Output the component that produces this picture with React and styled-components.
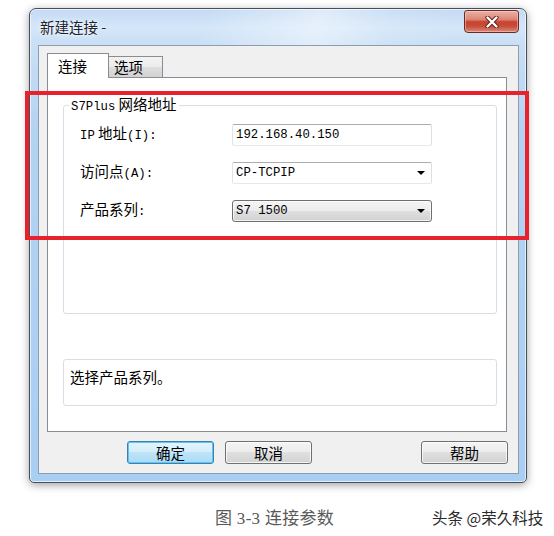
import React from 'react';
import styled, { createGlobalStyle } from 'styled-components';

const Global = createGlobalStyle`
  html, body { margin: 0; padding: 0; background: #fff; }
  body { font-family: "Noto Sans CJK SC", sans-serif; color: #000; }
  #root { width: 554px; height: 536px; }
`;

const Page = styled.div`
  position: relative;
  width: 554px;
  height: 536px;
  box-sizing: border-box;
  padding: 8px 0 0 29px;
  display: flex;
  flex-direction: column;
  overflow: hidden;
`;

const Window = styled.div`
  width: 498px;
  height: 475px;
  box-sizing: border-box;
  border: 1px solid #46505c;
  border-radius: 7px 7px 5px 5px;
  background: linear-gradient(180deg, #c3daf3 0px, #d4e6f9 18px, #c9dff5 36px, #b3d3f2 120px, #a9cef3 100%);
  box-shadow: 0 2px 9px rgba(0, 0, 0, 0.38), inset 0 0 0 1px rgba(255, 255, 255, 0.65);
  display: flex;
  flex-direction: column;
`;

const TitleBar = styled.div`
  height: 36px;
  flex: none;
  display: flex;
  align-items: center;
  padding-left: 10px;
  border-radius: 6px 6px 0 0;
  background: linear-gradient(105deg, rgba(255,255,255,0) 35%, rgba(255,255,255,0.45) 58%, rgba(255,255,255,0.1) 72%, rgba(255,255,255,0) 85%);
`;

const Title = styled.span`
  font-size: 14.5px;
  line-height: 20px;
  color: #1b2330;
  text-shadow: 0 0 5px rgba(255, 255, 255, 0.95), 0 0 2px rgba(255, 255, 255, 0.9);
  margin-top: -1px;
`;

const CloseButton = styled.div`
  margin-left: auto;
  margin-right: 7px;
  align-self: flex-start;
  margin-top: 1px;
  width: 55px;
  height: 23px;
  box-sizing: border-box;
  border: 1px solid #6a2b22;
  border-radius: 3px 3px 4px 4px;
  background: linear-gradient(180deg, #eab1a5 0%, #dd8676 40%, #c6432f 52%, #c84c38 72%, #da8a7b 100%);
  box-shadow: inset 0 0 0 1px rgba(255, 220, 210, 0.45);
  display: flex;
  align-items: center;
  justify-content: center;
`;

const Client = styled.div`
  flex: 1;
  margin: 0 7px 8px 8px;
  background: #f0f0f0;
  border: 1px solid #8f9cab;
  display: flex;
  flex-direction: column;
  padding: 7px 11px 9px 8px;
  min-height: 0;
`;

const TabStrip = styled.div`
  height: 24px;
  flex: none;
  display: flex;
  align-items: flex-end;
  position: relative;
  z-index: 1;
`;

const Tab = styled.div`
  box-sizing: border-box;
  border: 1px solid #898c95;
  border-bottom: none;
  display: flex;
  align-items: center;
  font-size: 14.5px;
  line-height: 18px;
  width: ${p => (p.$active ? '62px' : '54px')};
  height: ${p => (p.$active ? '25px' : '21px')};
  margin-bottom: ${p => (p.$active ? '-1px' : '0')};
  padding-left: ${p => (p.$active ? '10px' : '5px')};
  padding-bottom: ${p => (p.$active ? '1px' : '0')};
  border-left: ${p => (p.$active ? '1px solid #898c95' : 'none')};
  background: ${p => (p.$active ? '#fff' : 'linear-gradient(180deg, #f3f3f3 0%, #ebebeb 50%, #dedede 51%, #d2d2d2 100%)')};
`;

const Panel = styled.div`
  flex: 1;
  background: #fff;
  border: 1px solid #898c95;
  display: flex;
  flex-direction: column;
  padding: 0 9px 0 15px;
  min-height: 0;
`;

const GroupBox = styled.fieldset`
  margin: 18px 0 0;
  padding: 0;
  min-width: 0;
  border: 1px solid #d5dfe5;
  border-radius: 3px;
`;

const Legend = styled.legend`
  margin-left: 5px;
  padding: 0 2px;
  font-size: 14.5px;
  line-height: 16px;
`;

const FormGrid = styled.div`
  display: grid;
  grid-template-columns: 152px 200px;
  row-gap: 15px;
  align-items: center;
  padding: 8px 0 91px 16px;
`;

const Label = styled.span`
  font-size: 14.5px;
  line-height: 20px;
  white-space: nowrap;
`;

const Mono = styled.span`
  font-family: "Liberation Mono", monospace;
  font-size: 12.3px;
`;

const Field = styled.div`
  height: 22px;
  box-sizing: border-box;
  display: flex;
  align-items: center;
  padding-left: 3px;
  font-family: "Liberation Mono", monospace;
  font-size: 12.3px;
  border: 1px solid;
  border-radius: ${p => (p.$button ? '3px' : '2px')};
  border-color: ${p => (p.$button ? '#707070' : '#abadb3 #dbdfe6 #e3e9ef #e2e3ea')};
  background: ${p => (p.$button ? 'linear-gradient(180deg, #f4f4f4 0%, #ececec 49%, #dfdfdf 50%, #d2d2d2 100%)' : '#fff')};
  box-shadow: ${p => (p.$button ? 'inset 0 0 0 1px rgba(255,255,255,0.7)' : 'none')};
`;

const Arrow = styled.span`
  margin-left: auto;
  margin-right: 6px;
  width: 0;
  height: 0;
  border-left: 4px solid transparent;
  border-right: 4px solid transparent;
  border-top: 4px solid #000;
`;

const InfoBox = styled.div`
  margin-top: 45px;
  height: 47px;
  box-sizing: border-box;
  border: 1px solid #d5dfe5;
  border-radius: 3px;
  padding: 7px 6px 0;
  font-size: 14.5px;
  line-height: 20px;
`;

const ButtonRow = styled.div`
  flex: none;
  margin-top: 9px;
  display: flex;
  gap: 11px;
  padding-left: 80px;
  margin-right: -1px;
`;

const Button = styled.div`
  width: 87px;
  height: 23px;
  box-sizing: border-box;
  border: 1px solid ${p => (p.$default ? '#3c7fb1' : '#707070')};
  border-radius: 3px;
  display: flex;
  align-items: center;
  justify-content: center;
  font-size: 14.5px;
  margin-left: ${p => (p.$push ? 'auto' : '0')};
  background: ${p => (p.$default
    ? 'linear-gradient(180deg, #e5f4fc 0%, #d4edfb 49%, #bde4f9 50%, #abdaf5 100%)'
    : 'linear-gradient(180deg, #f4f4f4 0%, #ececec 49%, #dfdfdf 50%, #d2d2d2 100%)')};
  box-shadow: ${p => (p.$default ? 'inset 0 0 0 1px #62c5f1' : 'inset 0 0 0 1px rgba(255,255,255,0.75)')};
`;

const CaptionRow = styled.div`
  margin-top: 21px;
  height: 24px;
  display: grid;
  grid-template-columns: 186px 217px auto;
  align-items: center;
`;

const Caption = styled.span`
  grid-column: 2;
  font-family: "Liberation Serif", "Noto Sans CJK SC", serif;
  font-size: 17px;
  letter-spacing: 0.3px;
  color: #595959;
  white-space: nowrap;
`;

const Watermark = styled.span`
  grid-column: 3;
  font-size: 15.5px;
  color: #2b2b2b;
  white-space: nowrap;
`;

const Highlight = styled.div`
  position: absolute;
  left: 25px;
  top: 91px;
  width: 504px;
  height: 149px;
  box-sizing: border-box;
  border: 4px solid #e8222c;
  pointer-events: none;
`;

const CloseIcon = () => (
  <svg width="14" height="12" viewBox="0 0 14 12">
    <path d="M2.5 1.5 L11.5 10.5 M11.5 1.5 L2.5 10.5" stroke="#5b2019" strokeWidth="4.2" strokeLinecap="round" fill="none" />
    <path d="M2.5 1.5 L11.5 10.5 M11.5 1.5 L2.5 10.5" stroke="#ffffff" strokeWidth="2.4" strokeLinecap="round" fill="none" />
  </svg>
);

export default function App() {
  return (
    <>
      <Global />
      <Page>
        <Window>
          <TitleBar>
            <Title>新建连接 -</Title>
            <CloseButton><CloseIcon /></CloseButton>
          </TitleBar>
          <Client>
            <TabStrip>
              <Tab $active>连接</Tab>
              <Tab>选项</Tab>
            </TabStrip>
            <Panel>
              <GroupBox>
                <Legend><Mono>S7Plus</Mono> 网络地址</Legend>
                <FormGrid>
                  <Label><Mono>IP</Mono> 地址<Mono>(I):</Mono></Label>
                  <Field>192.168.40.150</Field>
                  <Label>访问点<Mono>(A):</Mono></Label>
                  <Field>CP-TCPIP<Arrow /></Field>
                  <Label>产品系列<Mono>:</Mono></Label>
                  <Field $button>S7 1500<Arrow /></Field>
                </FormGrid>
              </GroupBox>
              <InfoBox>选择产品系列。</InfoBox>
            </Panel>
            <ButtonRow>
              <Button $default>确定</Button>
              <Button>取消</Button>
              <Button $push>帮助</Button>
            </ButtonRow>
          </Client>
        </Window>
        <CaptionRow>
          <Caption>图 3-3 连接参数</Caption>
          <Watermark>头条 @荣久科技</Watermark>
        </CaptionRow>
        <Highlight />
      </Page>
    </>
  );
}
